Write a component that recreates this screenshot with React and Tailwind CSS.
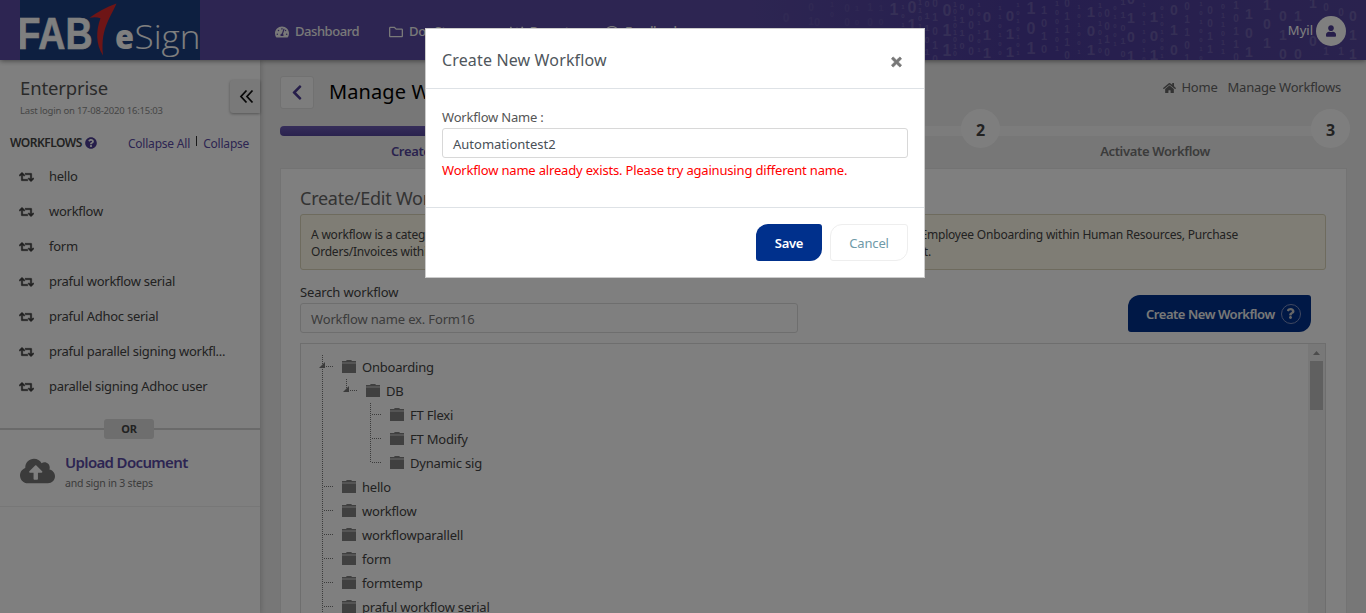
import React from "react";
import {
  FaRetweet,
  FaTachometerAlt,
  FaRegFolder,
  FaChartBar,
  FaRegComment,
  FaQuestionCircle,
  FaHome,
  FaUser,
  FaCloudUploadAlt,
  FaChevronLeft,
  FaQuestion,
  FaTimes,
} from "react-icons/fa";

// [x, font size, first baseline, step, digits]
const DIGITS = [
  [786, 12, 22, 0, "0"], [811, 10, 11, 14, "01"], [817, 11, 26, 0, "0"],
  [832, 7, 7, 10, "10"], [847, 10, 12, 14, "00"], [857, 8, 11, 14, "10"],
  [870, 10, 11, 15, "10"], [881, 9, 11, 14, "10"], [894, 16, 15, 0, "1"], [903, 6, 9, 9, "101"],
  [912, 16, 13, 18, "010"], [920, 7, 5, 8, "11011"], [927, 9, 7, 12, "01101"], [935, 10, 7, 14, "01010"],
  [947, 16, 16, 20, "011"], [955, 7, 7, 7, "10101010"], [962, 9, 10, 13, "0110"], [971, 10, 16, 13, "0000"],
  [979, 6, 7, 9, "101101"], [987, 15, 22, 18, "011"], [1000, 6, 10, 9, "110100"], [1010, 15, 21, 18, "011"],
  [1018, 6, 7, 8, "1010101"], [1031, 16, 14, 20, "101"], [1044, 11, 14, 13, "1010"], [1057, 7, 6, 9, "100101"],
  [1067, 10, 7, 13, "01110"], [1079, 6, 9, 9, "101001"], [1091, 15, 17, 19, "101"], [1100, 7, 8, 9, "101010"],
  [1107, 10, 17, 13, "0010"], [1115, 6, 10, 9, "01001"], [1123, 9, 5, 13, "11010"], [1131, 14, 4, 19, "0101"],
  [1144, 6, 7, 9, "1011010"], [1154, 15, 22, 19, "101"], [1162, 6, 10, 8, "0101001"], [1174, 14, 15, 20, "010"],
  [1187, 10, 10, 13, "01101"], [1201, 6, 6, 9, "1010010"], [1210, 10, 14, 13, "0011"], [1223, 7, 9, 9, "011011"],
  [1236, 10, 9, 13, "10110"], [1249, 14, 19, 19, "101"], [1267, 14, 10, 19, "101"], [1283, 14, 21, 19, "010"],
  [1298, 14, 21, 0, "1"], [1298, 14, 59, 0, "0"], [1313, 14, 8, 0, "1"], [1313, 14, 46, 0, "0"],
  [1326, 10, 11, 0, "0"], [1326, 10, 55, 0, "1"], [1341, 10, 16, 0, "0"], [1341, 10, 55, 0, "1"],
  [1353, 14, 21, 19, "011"],
];

function BinaryPattern() {
  return (
    <svg className="absolute right-0 top-0 h-[60px] w-[606px]" viewBox="760 0 606 60" aria-hidden="true">
      {DIGITS.map(([x, size, y, step, str], i) =>
        str.split("").map((d, j) => (
          <text key={i + "-" + j} x={x} y={y + j * step} fontSize={size} fontWeight="600" textAnchor="middle"
            fontFamily="Liberation Sans, sans-serif" fill="#9d94c8"
            opacity={x < 890 ? 0.14 : size > 12 ? 0.36 : 0.32}>{d}</text>
        ))
      )}
    </svg>
  );
}

function Logo() {
  return (
    <svg className="ml-5 h-[60px] w-[180px] bg-[#1b3f80]" viewBox="0 0 180 60">
      <text x="-2.500" y="49" fontFamily="Liberation Sans, sans-serif" fontWeight="700" fontSize="44" textLength="75" lengthAdjust="spacingAndGlyphs" fill="#fff" stroke="#fff" strokeWidth="0.6">FAB</text>
      <path d="M96.500 3.500C86 7.500 77 12 69.500 17.800C73.500 17 77.500 17 80.500 18.300C76 30 75.500 44 83 55.500C81.500 41 83.500 31 88 21C91 14.500 94 9.500 96.500 3.500Z" fill="#dc2a2c" />
      <text x="95" y="49" fontFamily="Open Sans, sans-serif" fontWeight="800" fontSize="33" textLength="19" lengthAdjust="spacingAndGlyphs" fill="#fff">e</text>
      <text x="114.500" y="48.500" fontFamily="Open Sans, sans-serif" fontWeight="300" fontSize="33" textLength="66" lengthAdjust="spacingAndGlyphs" fill="#fff">Sign</text>
    </svg>
  );
}

const NAV = [
  [FaTachometerAlt, "Dashboard"],
  [FaRegFolder, "Doc Storage"],
  [FaChartBar, "Reports"],
  [FaRegComment, "Feedback"],
];

function Header() {
  return (
    <header className="relative z-10 flex h-[60px] shrink-0 items-center bg-gradient-to-r from-[#5a4ba4] from-55% via-[#4c3c9c] via-75% to-[#54459c] shadow-[0_1px_5px_rgba(0,0,0,0.45)]">
      <BinaryPattern />
      <Logo />
      <nav className="ml-[75px] flex items-center gap-[30px] pt-[3px] text-[13px] font-medium tracking-[-0.45px] text-[#f2f2f2]">
        {NAV.map(([Icon, label]) => (
          <span key={label} className="flex items-center gap-[6px]">
            <Icon className="h-[14px] w-[14px]" />
            {label}
          </span>
        ))}
      </nav>
      <div className="relative ml-auto mr-5 flex items-center gap-[3px] pt-[2px] text-[13px] text-white">
        <span>Myil</span>
        <span className="flex h-[30px] w-[30px] items-center justify-center rounded-full bg-white">
          <FaUser className="h-[12px] w-[10px] text-[#4c3c94]" />
        </span>
      </div>
    </header>
  );
}

const WORKFLOWS = ["hello", "workflow", "form", "praful workflow serial", "praful Adhoc serial", "praful parallel signing workfl...", "parallel signing Adhoc user"];

function Sidebar() {
  return (
    <aside className="relative flex w-[260px] shrink-0 flex-col bg-white shadow-[1px_0_5px_rgba(0,0,0,0.18)]">
      <div className="flex h-[68px] justify-between pl-5">
        <div className="pt-[15px]">
          <h2 className="text-[18.500px] leading-[26px] tracking-[-0.15px] text-[#555]">Enterprise</h2>
          <p className="text-[9.500px] leading-[19px] tracking-[-0.2px] text-[#8c8c8c]">Last login on 17-08-2020 16:15:03</p>
        </div>
        <div className="mt-5 flex h-[33px] w-[30px] items-center justify-center rounded-l-[3px] bg-[#f2f2f2] pl-[2px] shadow-[0_1px_3px_rgba(0,0,0,0.35)]">
          <svg className="h-[15px] w-[15px]" viewBox="0 0 15 15" fill="none" stroke="#111" strokeWidth="1.8">
            <path d="M7.500 1.500 L2 7.500 L7.500 13.500 M13.500 1.500 L8 7.500 L13.500 13.500" />
          </svg>
        </div>
      </div>
      <div className="flex h-[30px] items-center pl-[10px] text-[12px] tracking-[-0.2px]">
        <b className="text-[12px] font-semibold tracking-[-0.5px] text-[#444]">WORKFLOWS</b>
        <FaQuestionCircle className="ml-[3px] h-3 w-3 text-[#4c3c94]" />
        <span className="ml-[31px] pt-[2px] text-[#5a4ba4]">Collapse All</span>
        <span className="mx-[6px] mb-1 h-[10px] w-px bg-[#333]" />
        <span className="pt-[2px] text-[#5a4ba4]">Collapse</span>
      </div>
      <ul className="flex flex-col">
        {WORKFLOWS.map((w) => (
          <li key={w} className="flex h-[35px] items-center gap-[15px] whitespace-nowrap pl-[19px] pt-[2px] text-[13px] tracking-[-0.27px] text-[#444]">
            <FaRetweet className="h-3 w-[15px] text-[#444]" stroke="currentColor" strokeWidth="16" />
            {w}
          </li>
        ))}
      </ul>
      <div className="mt-[16px] flex h-5 items-center">
        <span className="h-[2px] flex-1 bg-[#d4d4d4]" />
        <span className="flex h-5 w-[50px] items-center justify-center rounded-[3px] bg-[#dcdcdc] pt-px text-[11px] font-bold tracking-[-0.3px] text-[#444]">OR</span>
        <span className="h-[2px] w-[106px] bg-[#d4d4d4]" />
      </div>
      <div className="flex h-[68px] items-center gap-[10px] border-b border-[#eee] pl-5">
        <FaCloudUploadAlt className="mb-[4px] h-[28px] w-[35px] text-[#777]" />
        <div>
          <p className="text-[15px] font-semibold leading-[21px] tracking-[-0.65px] text-[#5a4ba4]">Upload Document</p>
          <p className="text-[10.500px] leading-[20px] tracking-[-0.22px] text-[#777]">and sign in 3 steps</p>
        </div>
      </div>
    </aside>
  );
}

function Step({ label, number, done }) {
  return (
    <div className="relative w-[350px] shrink-0">
      <div className={done ? "h-[10px] rounded-l-[4px] bg-gradient-to-b from-[#6c5cb4] to-[#54459c]" : "h-[10px] bg-[#f9f9f9]"} />
      <span className="absolute right-[-20px] top-[-17px] z-10 flex h-[39px] w-[39px] items-center justify-center rounded-full bg-[#fdfdfd] pt-[2px] text-[16px] font-bold text-[#444]">{number}</span>
      <p className={done ? "pt-[5px] text-center text-[13px] font-semibold leading-[20px] tracking-[-0.35px] text-[#54459c]" : "pt-[5px] text-center text-[13px] font-semibold leading-[20px] tracking-[-0.35px] text-[#777]"}>{label}</p>
    </div>
  );
}

const TREE = [
  ["Onboarding", 0, "open"], ["DB", 1, "open"], ["FT Flexi", 2, "mid"], ["FT Modify", 2, "mid"], ["Dynamic sig", 2, "last"],
  ["hello", 0, "mid"], ["workflow", 0, "mid"], ["workflowparallell", 0, "mid"], ["form", 0, "mid"], ["formtemp", 0, "mid"], ["praful workflow serial", 0, "mid"],
];

function Connector({ kind, through }) {
  return (
    <svg className="h-6 w-6 shrink-0" viewBox="0 0 24 24" shapeRendering="crispEdges">
      {kind !== "blank" && (
        <path d={through ? "M12.500 0V24" : "M12.500 0V12"} stroke="#777" strokeDasharray="1 1" fill="none" />
      )}
      {kind !== "blank" && kind !== "pass" && <path d="M14 11.500H24" stroke="#777" strokeDasharray="1 1" />}
      {kind === "open" && <path d="M15 7V13H9Z" fill="#777" shapeRendering="auto" />}
    </svg>
  );
}

function TreeRow({ label, depth, kind }) {
  return (
    <li className="flex h-6 shrink-0 items-center whitespace-nowrap text-[13px] tracking-[-0.2px] text-[#444]">
      {depth > 0 && <Connector kind="pass" through />}
      {depth > 1 && <Connector kind="blank" />}
      <Connector kind={kind} through={kind === "mid" || (kind === "open" && depth === 0)} />
      <svg className="mb-px ml-[8px] mr-[6px] h-[13px] w-[14px]" viewBox="0 0 14 13">
        <path d="M0 1.500H4L5 0H9L10 1.500H14V4H0Z" fill="#aaa" />
        <path d="M0 1H4L5 0H9L10 1H14V2H0ZM0 4H14V13H0Z" fill="#808080" />
      </svg>
      <span className="pt-[2px]">{label}</span>
    </li>
  );
}

function Main() {
  return (
    <main className="flex min-w-0 flex-1 flex-col overflow-hidden bg-[#eee] pl-5 pr-5">
      <div className="flex h-[66px] shrink-0 items-center">
        <span className="mt-[-2px] flex h-[33px] w-[34px] items-center justify-center rounded-[3px] border border-[#e2e2e2] bg-[#fafafa]">
          <FaChevronLeft className="h-[17px] w-[12px] text-[#4c3c94]" />
        </span>
        <h1 className="ml-[15px] mt-[-2px] text-[20px] leading-[26px] tracking-[0.1px] text-black">Manage Workflows</h1>
        <div className="ml-auto mr-[5px] mt-[-11px] flex items-center text-[13px] tracking-[-0.22px] text-[#666]">
          <FaHome className="mr-[5px] h-3 w-[13px]" />
          <span className="mr-[10px]">Home</span>
          <span>Manage Workflows</span>
        </div>
      </div>
      <div className="flex h-[42px] shrink-0">
        <Step label="Create/Edit Workflow" number="1" done />
        <Step label="Assign Workflow" number="2" />
        <Step label="Activate Workflow" number="3" />
      </div>
      <section className="mr-[-1px] flex h-[520px] shrink-0 flex-col border border-[#e6e6e6] bg-white pl-[19px] pr-[20px] pt-[17px]">
        <h3 className="h-7 shrink-0 text-[18px] leading-[25px] tracking-[-0.25px] text-[#666]">Create/Edit Workflow</h3>
        <div className="flex h-14 shrink-0 flex-col justify-center rounded-[3px] border border-[#dcd6bc] bg-[#fffaea] px-[10px] pt-[2px] text-[12px] leading-[17px] tracking-[-0.2px] text-[#444]">
          <div className="flex w-[927px] justify-between whitespace-nowrap">
            <span>A workflow is a category of documents to be signed in a sequence by a set of users, e.g.</span>
            <span>Employee Onboarding within Human Resources, Purchase</span>
          </div>
          <div className="flex w-[620px] justify-between whitespace-nowrap">
            <span>Orders/Invoices within Finance, Contracts and Agreements</span>
            <span>within the Sales department.</span>
          </div>
        </div>
        <div className="flex h-[73px] shrink-0 items-start justify-between">
          <div className="w-[498px] pt-3">
            <p className="text-[13px] leading-[21px] tracking-[-0.15px] text-[#444]">Search workflow</p>
            <div className="flex h-[30px] items-center rounded-[3px] border border-[#ddd] px-[10px] pt-[3px] text-[13px] tracking-[-0.15px] text-[#777]">Workflow name ex. Form16</div>
          </div>
          <button className="mr-[15px] mt-[25px] flex h-[37px] w-[183px] items-center rounded-[3px] rounded-br-[12px] rounded-tl-[12px] bg-[#00308c] pl-[18px] text-[13px] font-semibold tracking-[-0.46px] text-[#f0f0f0]">
            <span className="whitespace-nowrap pt-[2px]">Create New Workflow</span>
            <span className="ml-[6px] flex h-[20px] w-[20px] shrink-0 items-center justify-center rounded-full border border-[#8090c0]">
              <FaQuestion className="h-[11px] w-[9px] text-[#ccc]" />
            </span>
          </button>
        </div>
        <div className="flex h-[320px] shrink-0 border border-[#ddd]">
          <ul className="flex flex-1 flex-col pl-[9px] pt-[11px]">
            {TREE.map(([label, depth, kind]) => (
              <TreeRow key={label + depth} label={label} depth={depth} kind={kind} />
            ))}
          </ul>
          <div className="flex w-[17px] flex-col items-center bg-[#f1f1f1]">
            <svg className="h-[17px] w-[17px]" viewBox="0 0 17 17"><path d="M5 11L8.500 7L12 11Z" fill="#999" /></svg>
            <span className="h-[49px] w-[13px] bg-[#c1c1c1]" />
          </div>
        </div>
      </section>
    </main>
  );
}

function Modal() {
  return (
    <div className="absolute inset-0 z-20 flex items-start bg-black/50 pl-[425px] pt-7">
      <div className="flex h-[250px] w-[500px] flex-col border border-[#ccc] bg-white">
        <div className="flex h-[60px] shrink-0 items-center justify-between border-b border-[#dee2e6] pl-4 pr-[22px] pt-[3px]">
          <h4 className="text-[16px] tracking-[0.15px] text-[#4f565c]">Create New Workflow</h4>
          <FaTimes className="mt-[3px] h-[14px] w-[11px] text-[#777]" stroke="currentColor" strokeWidth="30" />
        </div>
        <div className="flex h-[118px] shrink-0 flex-col px-4 pt-[18px]">
          <label className="text-[13px] leading-[21px] tracking-[-0.2px] text-[#555]">Workflow Name :</label>
          <div className="flex h-[30px] shrink-0 items-center rounded-[3px] border border-[#d8d8d8] px-[10px] pt-[3px] text-[13px] text-[#495057]">Automationtest2</div>
          <p className="whitespace-nowrap pt-[2px] text-[13px] leading-[21px] tracking-[-0.18px] text-[#ff0000]">Workflow name already exists. Please try againusing different name.</p>
        </div>
        <div className="flex flex-1 justify-end gap-2 border-t border-[#dee2e6] pr-4 pt-4">
          <button className="h-[37px] w-[66px] rounded-[3px] rounded-br-[12px] rounded-tl-[12px] bg-[#00308c] pt-[2px] text-[13px] font-semibold tracking-[-0.3px] text-white">Save</button>
          <button className="h-[37px] w-[78px] rounded-[3px] rounded-br-[12px] rounded-tl-[12px] border border-[#eee] pt-[2px] text-[13px] tracking-[-0.15px] text-[#6f9aa8]">Cancel</button>
        </div>
      </div>
    </div>
  );
}

export default function App() {
  return (
    <div className="relative flex h-[613px] w-[1366px] flex-col overflow-hidden bg-white font-['Noto_Sans',sans-serif]">
      <Header />
      <div className="flex min-h-0 flex-1">
        <Sidebar />
        <Main />
      </div>
      <Modal />
    </div>
  );
}
